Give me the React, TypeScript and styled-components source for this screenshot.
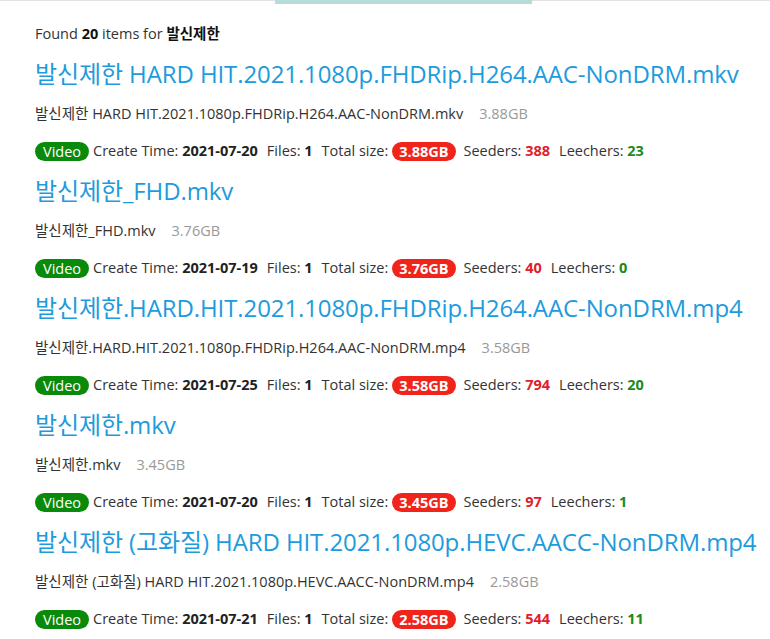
import React from "react";
import styled, { createGlobalStyle } from "styled-components";

const Global = createGlobalStyle`
  html, body { margin: 0; padding: 0; background: #fff; }
  body { font-family: "Open Sans", "Noto Sans CJK KR", sans-serif; color: #333; }
`;

const TopBar = styled.div`
  height: 1px;
  background: #e2e2e2;
  display: flex;
  justify-content: center;
  padding-left: 36px;
`;

const TopAccent = styled.div`
  width: 257px;
  height: 4px;
  background: #b5dcd9;
`;

const Main = styled.main`
  padding: 23px 0 0 35px;
`;

const Summary = styled.div`
  font-size: 14.5px;
  line-height: 20px;
  color: #333;
  b { color: #111; }
`;

const Item = styled.section`
  display: flex;
  flex-direction: column;
  padding-top: 13px;
`;

const Title = styled.a`
  font-size: 24px;
  line-height: 34px;
  color: #1e9bdc;
  text-decoration: none;
  white-space: nowrap;
  letter-spacing: -0.1px;
`;

const FileLine = styled.div`
  font-size: 14.5px;
  line-height: 20px;
  color: #333;
  margin-top: 13px;
  white-space: nowrap;
`;

const FileSize = styled.span`
  color: #999;
  margin-left: 16px;
`;

const Meta = styled.div`
  display: flex;
  align-items: center;
  font-size: 14.5px;
  line-height: 20px;
  color: #333;
  margin-top: 17px;
  white-space: nowrap;
`;

const Pill = styled.span<{ $bg: string }>`
  background: ${(p) => p.$bg};
  color: #fff;
  border-radius: 10px;
  padding: 0 8px;
  height: 19px;
  line-height: 19px;
  display: inline-flex;
  align-items: center;
  margin-right: 4px;
`;

const SizePill = styled(Pill)`
  font-weight: 700;
  padding: 0 7px;
  margin-left: 4px;
  margin-right: 8px;
`;

const Field = styled.span`
  margin-right: 9px;
`;

const Value = styled.b<{ $color?: string }>`
  color: ${(p) => p.$color || "#222"};
`;

const items = [
  { title: "발신제한 HARD HIT.2021.1080p.FHDRip.H264.AAC-NonDRM.mkv", size: "3.88GB", date: "2021-07-20", seeders: 388, leechers: 23 },
  { title: "발신제한_FHD.mkv", size: "3.76GB", date: "2021-07-19", seeders: 40, leechers: 0 },
  { title: "발신제한.HARD.HIT.2021.1080p.FHDRip.H264.AAC-NonDRM.mp4", size: "3.58GB", date: "2021-07-25", seeders: 794, leechers: 20 },
  { title: "발신제한.mkv", size: "3.45GB", date: "2021-07-20", seeders: 97, leechers: 1 },
  { title: "발신제한 (고화질) HARD HIT.2021.1080p.HEVC.AACC-NonDRM.mp4", size: "2.58GB", date: "2021-07-21", seeders: 544, leechers: 11 },
];

export default function App() {
  return (
    <>
      <Global />
      <TopBar>
        <TopAccent />
      </TopBar>
      <Main>
        <Summary>
          Found <b>20</b> items for <b>발신제한</b>
        </Summary>
        {items.map((it) => (
          <Item key={it.title}>
            <Title href="#">{it.title}</Title>
            <FileLine>
              {it.title}
              <FileSize>{it.size}</FileSize>
            </FileLine>
            <Meta>
              <Pill $bg="#0a8a0a">Video</Pill>
              <Field>
                Create Time: <Value>{it.date}</Value>
              </Field>
              <Field>
                Files: <Value>1</Value>
              </Field>
              Total size:
              <SizePill $bg="#f0241a">{it.size}</SizePill>
              <Field>
                Seeders: <Value $color="#e0202a">{it.seeders}</Value>
              </Field>
              <Field>
                Leechers: <Value $color="#1a8a1a">{it.leechers}</Value>
              </Field>
            </Meta>
          </Item>
        ))}
      </Main>
    </>
  );
}
